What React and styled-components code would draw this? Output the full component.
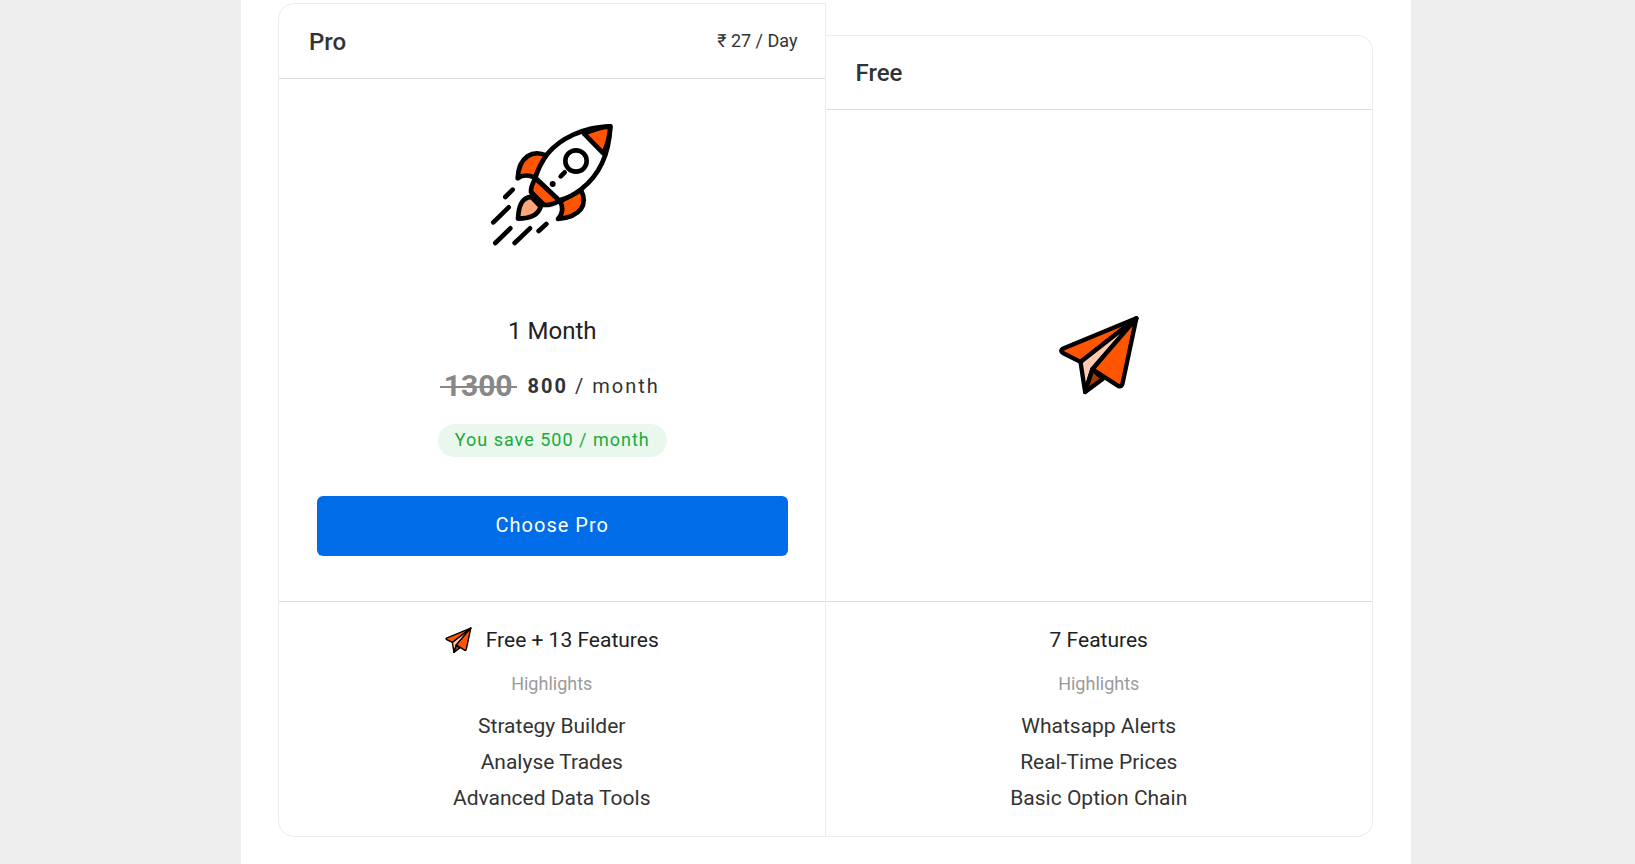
import React from 'react'
import styled, { createGlobalStyle } from 'styled-components';

const GlobalStyle = createGlobalStyle`
  * {
    box-sizing: border-box;
  }
  body {
    margin: 0;
    background: #eeeeee;
    color: #333333;
    font-family: Roboto, 'Liberation Sans', sans-serif;
  }
`

const Page = styled.main`
  padding-left: 17px;
`
const Sheet = styled.section`
  max-width: 1170px;
  min-height: 100vh;
  margin: 0 auto;
  padding: 3px 38px 27px 37px;
  background: #ffffff;
`
const Plans = styled.div`
  display: grid;
  grid-template-columns: 1fr 1fr;
`
const Plan = styled.article`
  display: flex;
  flex-direction: column;
  margin-top: ${props => props.$featured ? '0' : '32px'};
  border: 1px solid #ececec;
  border-left-width: ${props => props.$featured ? '1px' : '0'};
  border-radius: ${props => props.$featured ? '16px 0 0 16px' : '0 16px 16px 0'};
`
const PlanHeader = styled.header`
  display: flex;
  align-items: center;
  justify-content: space-between;
  height: ${props => props.$compact ? '74px' : '75px'};
  padding: 0 27px 0 30px;
  border-bottom: 1px solid #dddddd;
`
const PlanName = styled.h2`
  margin: 0;
  padding-top: 1px;
  font-size: 24px;
  font-weight: 500;
  line-height: 32px;
`
const DayPrice = styled.span`
  font-size: 18px;
  line-height: 24px;
`
const PlanBody = styled.div`
  flex: 1;
  display: flex;
  flex-direction: column;
  align-items: center;
  justify-content: center;
  padding: 31px 37px 45px 38px;
  border-bottom: 1px solid #dddddd;
`
const EmptyBody = styled(PlanBody)`
  padding: 0;
`
const Duration = styled.p`
  margin: 55px 0 19px;
  color: #212121;
  font-size: 24px;
  line-height: 32px;
`
const Price = styled.p`
  display: flex;
  align-items: center;
  gap: 11px;
  margin: 0 0 18px;
  padding-right: 5px;
  font-size: 20px;
  line-height: 40px;
  letter-spacing: 2px;
`
const OldPrice = styled.del`
  position: relative;
  padding: 0 4px;
  color: #888888;
  font-size: 30px;
  font-weight: 700;
  letter-spacing: 0;
  text-decoration: none;

  &::after {
    content: '';
    position: absolute;
    top: 50%;
    left: 0;
    right: 0;
    height: 2px;
    background: #888888;
  }
`
const Saving = styled.p`
  height: 33px;
  margin: 0 0 39px;
  padding: 0 17px;
  border-radius: 17px;
  background: #e9f7ec;
  color: #18ab3e;
  font-size: 18px;
  line-height: 32px;
  letter-spacing: 1px;
`
const ChooseButton = styled.button`
  width: 100%;
  height: 60px;
  padding: 0 0 2px;
  border: 0;
  border-radius: 6px;
  background: #006ce8;
  color: #ffffff;
  font-family: inherit;
  font-size: 20px;
  letter-spacing: 1px;
  cursor: pointer;
`
const Features = styled.div`
  padding: 20px 0;
  text-align: center;
`
const FeatureTitle = styled.h3`
  display: flex;
  align-items: center;
  justify-content: center;
  gap: 14px;
  margin: 0 0 14px;
  color: #212121;
  font-size: 21px;
  font-weight: 400;
  line-height: 36px;
`
const Highlights = styled.p`
  margin: 0 0 12px;
  color: #9b9b9b;
  font-size: 18px;
  line-height: 24px;
`
const FeatureList = styled.ul`
  margin: 0;
  padding: 0;
  list-style: none;
  font-size: 21px;
  line-height: 36px;
`

function Rocket() {
  return (
    <svg width="170" height="150" viewBox="-9 0 510 450" fill="none" stroke="#000" strokeWidth="14" strokeLinecap="round" strokeLinejoin="round" aria-hidden="true">
      <path fill="#ff5500" d="M230 137C190 118 146 138 143 205C158 194 177 195 194 203Z" />
      <path fill="#ff5500" d="M333 240C354 282 335 320 264 327C279 312 280 290 270 274Z" />
      <path fill="#ff5500" d="M196 205C186 222 182 232 183 246L222 285C240 286 255 280 268 272Z" />
      <path fill="#ffa57c" d="M183 260C156 264 146 286 144 326C184 326 206 312 212 290Z" />
      <path fill="#ffffff" d="M421 49C340 51 270 85 232 132C215 155 203 180 196 203L268 271C290 265 315 252 333 238C395 190 418 120 421 49Z" />
      <path fill="#ff5500" d="M342 71C368 59 395 51 421 49C419 78 412 105 400 130Z" />
      <circle cx="318" cy="153" r="32" />
      <path d="M272 199L284 187" />
      <circle cx="248" cy="222" r="9" fill="#000" stroke="none" />
      <path d="M106 261L128 239M70 337L116 292M76 399L121 355M134 399L180 355M206 363L229 342" />
    </svg>
  )
}

function PaperPlane({ size }) {
  return (
    <svg width={size} height={size} viewBox="54 40 248 248" stroke="#000" strokeWidth="13" strokeLinejoin="round" aria-hidden="true">
      <path fill="#ff5500" d="M291 50L68 142Q59 148 69 155L122 182Z" />
      <path fill="#ffc9b3" d="M291 50L122 182L136 273L158 204Z" />
      <path fill="#a63a00" d="M158 204L136 273L190 233Z" />
      <path fill="#ff5500" d="M291 50L158 204L237 255Q246 257 249 248Z" />
    </svg>
  )
}

function FeatureBlock({ title, icon, items }) {
  return (
    <Features>
      <FeatureTitle>{icon}{title}</FeatureTitle>
      <Highlights>Highlights</Highlights>
      <FeatureList>
        {items.map(item => <li key={item}>{item}</li>)}
      </FeatureList>
    </Features>
  )
}

export default function App() {
  return (
    <Page>
      <GlobalStyle />
      <Sheet>
        <Plans>
          <Plan $featured>
            <PlanHeader>
              <PlanName>Pro</PlanName>
              <DayPrice>₹ 27 / Day</DayPrice>
            </PlanHeader>
            <PlanBody>
              <Rocket />
              <Duration>1 Month</Duration>
              <Price>
                <OldPrice>1300</OldPrice>
                <span><b>800</b> / month</span>
              </Price>
              <Saving>You save 500 / month</Saving>
              <ChooseButton type="button">Choose Pro</ChooseButton>
            </PlanBody>
            <FeatureBlock
              icon={<PaperPlane size={27} />}
              title="Free + 13 Features"
              items={['Strategy Builder', 'Analyse Trades', 'Advanced Data Tools']}
            />
          </Plan>
          <Plan>
            <PlanHeader $compact>
              <PlanName>Free</PlanName>
            </PlanHeader>
            <EmptyBody>
              <PaperPlane size={82} />
            </EmptyBody>
            <FeatureBlock
              title="7 Features"
              items={['Whatsapp Alerts', 'Real-Time Prices', 'Basic Option Chain']}
            />
          </Plan>
        </Plans>
      </Sheet>
    </Page>
  );
};
